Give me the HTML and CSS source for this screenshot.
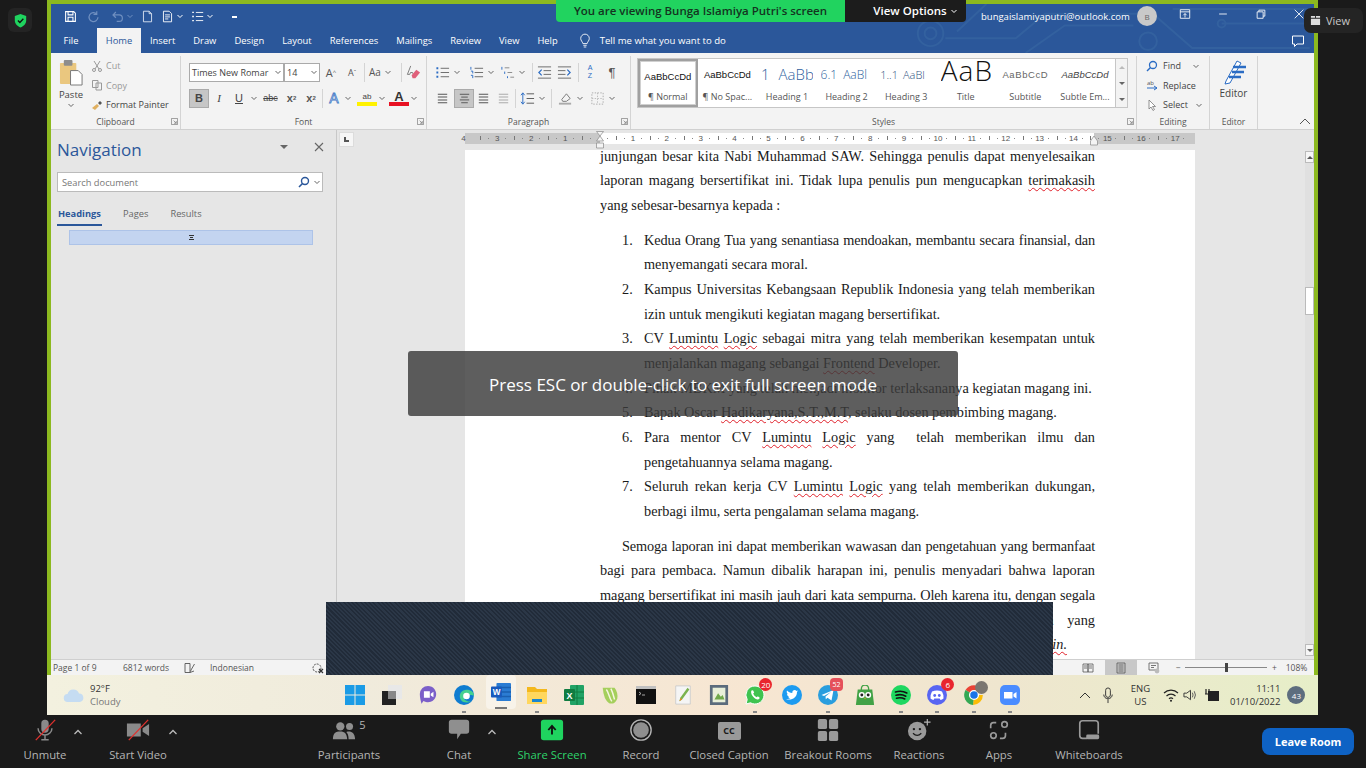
FILE: index.html
```html
<!DOCTYPE html>
<html lang="en">
<head>
    <meta charset="UTF-8">
    <title>Zoom - Word screen share</title>
    <link rel="stylesheet" href="styles.css">
</head>
<body>
    <svg class="defs">
        <symbol id="chev" viewBox="0 0 8 8"><path d="M1.5 3 L4 5.5 L6.5 3" fill="none" stroke="currentColor" stroke-width="1"/></symbol>
        <symbol id="launch" viewBox="0 0 8 8"><path d="M.5.5H7.5V7.5H.5Z M3 3L6 6M6 3.5V6H3.5" fill="none" stroke="#777" stroke-width=".8"/></symbol>
        <symbol id="lines" viewBox="0 0 16 16"><path d="M3 3.5H13M3 6.5H13M3 9.5H13M3 12.5H13" stroke="#555" stroke-width="1.1"/></symbol>
        <symbol id="up" viewBox="0 0 10 8"><path d="M1.5 6 L5 2.5 L8.5 6" fill="none" stroke="#bbb" stroke-width="1.3"/></symbol>
    </svg>

    <div class="app">
        <div class="screen-row">
            <div class="word">
                <!-- title bar -->
                <div class="titlebar">
                    <div class="qat">
                        <svg class="q q-save" viewBox="0 0 16 16"><path d="M2 2H12L14 4V14H2Z M5 2V6H11V2 M5 14V9H11V14" fill="none" stroke="#fff" stroke-width="1.3"/></svg>
                        <svg class="q q-redo" viewBox="0 0 16 16"><path d="M12 5A5.5 5.5 0 1 0 13.5 9 M12 1.5V5.5H8" fill="none" stroke="#6f8fc0" stroke-width="1.5"/></svg>
                        <svg class="q q-undo" viewBox="0 0 16 16"><path d="M3 6H10A4 4 0 0 1 10 14H7 M6 2.5L2.5 6L6 9.5" fill="none" stroke="#6f8fc0" stroke-width="1.5"/></svg>
                        <svg class="car-q dim"><use href="#chev"/></svg>
                        <svg class="q q-new" viewBox="0 0 16 16"><path d="M3 1.5H10L13 4.5V14.5H3Z M10 1.5V4.5H13" fill="none" stroke="#dfe7f3" stroke-width="1.1"/></svg>
                        <svg class="q q-print" viewBox="0 0 16 16"><path d="M3 1.5H10L13 4.5V14.5H3Z M5 6H11M5 8.5H11M5 11H9" fill="none" stroke="#fff" stroke-width="1.1"/></svg>
                        <svg class="car-q"><use href="#chev"/></svg>
                        <svg class="q q-list" viewBox="0 0 16 16"><path d="M6 3H15M6 8H15M6 13H15" stroke="#fff" stroke-width="1.1"/><path d="M1.5 3H3.5M1.5 8H3.5M1.5 13H3.5" stroke="#fff" stroke-width="1.6"/></svg>
                        <svg class="car-q"><use href="#chev"/></svg>
                        <span class="q-more"></span>
                    </div>
                    <div class="account">
                        <span class="email">bungaislamiyaputri@outlook.com</span>
                        <span class="avatar">B</span>
                    </div>
                    <div class="winbtns">
                        <svg class="wb" viewBox="0 0 14 14"><path d="M1.5 2H12.5V12H1.5Z M1.5 4.5H12.5 M7 11V6.5 M5 8.5L7 6.5L9 8.5" fill="none" stroke="#fff"/></svg>
                        <svg class="wb" viewBox="0 0 14 14"><path d="M2.5 7H11.5" stroke="#fff"/></svg>
                        <svg class="wb" viewBox="0 0 14 14"><path d="M2.5 4.5H9.5V12H2.5Z M4.5 4.5V2.5H11.5V9.5H9.5" fill="none" stroke="#fff"/></svg>
                        <svg class="wb" viewBox="0 0 14 14"><path d="M2 2L12 12M12 2L2 12" stroke="#fff"/></svg>
                    </div>
                </div>

                <!-- tabs -->
                <div class="tabs">
                    <span class="tab tab-file">File</span>
                    <span class="tab tab-home">Home</span>
                    <span class="tab">Insert</span>
                    <span class="tab">Draw</span>
                    <span class="tab">Design</span>
                    <span class="tab">Layout</span>
                    <span class="tab">References</span>
                    <span class="tab">Mailings</span>
                    <span class="tab">Review</span>
                    <span class="tab">View</span>
                    <span class="tab">Help</span>
                    <svg class="bulb" viewBox="0 0 14 18"><path d="M4.5 12C4 9.5 2 8.8 2 6A5 5 0 0 1 12 6C12 8.8 10 9.5 9.5 12Z M5 14H9M5.5 16H8.5" fill="none" stroke="#fff"/></svg>
                    <span class="tellme">Tell me what you want to do</span>
                    <svg class="comment" viewBox="0 0 14 14"><path d="M1.5 2H12.5V10H6L3.5 12.5V10H1.5Z" fill="none" stroke="#fff"/></svg>
                </div>
                <!-- circuit pattern in the title area -->
                <svg class="circuit" viewBox="0 0 420 50">
                    <g fill="none" stroke="#33619f" stroke-width="2">
                        <circle cx="33" cy="30" r="13"/><circle cx="33" cy="30" r="6"/>
                        <path d="M48 35H120L150 10H260L300 45H420 M130 50L170 22H240 M280 5H420 M330 20H420 M90 0L60 28"/>
                        <circle cx="330" cy="20" r="4"/><circle cx="255" cy="38" r="9"/>
                    </g>
                </svg>

                <!-- ribbon -->
                <div class="ribbon">
                    <section class="group g-clip">
                        <div class="g-body clip-body">
                            <div class="paste">
                                <svg class="paste-ico" viewBox="0 0 26 28"><rect x="1" y="4" width="17" height="22" rx="1" fill="#eac77f"/><rect x="5" y="1" width="9" height="6" rx="1" fill="#8d8d8d"/><path d="M12 12H20L24 16V27H12Z" fill="#fff" stroke="#777"/></svg>
                                <span class="paste-lbl">Paste</span>
                                <svg class="car"><use href="#chev"/></svg>
                            </div>
                            <div class="clip-list">
                                <div class="clip-row off"><svg class="i12" viewBox="0 0 12 12"><path d="M3 1L8 9M9 1L4 9" stroke="#999"/><circle cx="3" cy="10" r="1.5" fill="none" stroke="#999"/><circle cx="9" cy="10" r="1.5" fill="none" stroke="#999"/></svg>Cut</div>
                                <div class="clip-row off"><svg class="i12" viewBox="0 0 12 12"><path d="M1.5 1.5H7V8.5H1.5Z M5 4H10.5V11H5Z" fill="#f3f3f3" stroke="#999"/></svg>Copy</div>
                                <div class="clip-row"><svg class="i12" viewBox="0 0 12 12"><path d="M1 9L6 5L8 7L4 11Z" fill="#e0b060"/><path d="M7 4L9 2L11 4L9 6Z" fill="#555"/></svg>Format Painter</div>
                            </div>
                        </div>
                        <div class="g-label">Clipboard<svg class="launch"><use href="#launch"/></svg></div>
                    </section>

                    <section class="group g-font">
                        <div class="g-body stack">
                            <div class="rb-row">
                                <div class="combo combo-font"><span>Times New Romar</span><svg class="car"><use href="#chev"/></svg></div>
                                <div class="combo combo-size"><span>14</span><svg class="car"><use href="#chev"/></svg></div>
                                <span class="ib w22 big-a">A<sup>^</sup></span>
                                <span class="ib w20 small-a">A<sup>ˇ</sup></span>
                                <span class="sep ml2"></span>
                                <span class="ib w18 ml1 aa">Aa</span><svg class="car w8"><use href="#chev"/></svg>
                                <span class="sep ml9"></span>
                                <svg class="ib-svg ml4" viewBox="0 0 16 16"><path d="M5 1L1.5 10H4L4.8 8H7L7.5 9.5" fill="none" stroke="#777"/><path d="M6 11L11 5L15 8L10 14H7Z" fill="#e0607a"/></svg>
                            </div>
                            <div class="rb-row row2">
                                <span class="ib w20 on fx-b">B</span>
                                <span class="ib w20 fx-i">I</span>
                                <span class="ib w20 fx-u">U</span>
                                <svg class="car w10"><use href="#chev"/></svg>
                                <span class="ib w23 fx-s">abc</span>
                                <span class="ib w19 fx-x">x<sub>2</sub></span>
                                <span class="ib w20 fx-x">x<sup>2</sup></span>
                                <span class="sep ml1"></span>
                                <span class="ib w20 ml1 fx-a-blue">A</span><svg class="car w8"><use href="#chev"/></svg>
                                <span class="ib w20 ml5 fx-hl">ab</span><svg class="car w10"><use href="#chev"/></svg>
                                <span class="ib w20 ml2 fx-a-red">A</span><svg class="car w10"><use href="#chev"/></svg>
                            </div>
                        </div>
                        <div class="g-label">Font<svg class="launch"><use href="#launch"/></svg></div>
                    </section>

                    <section class="group g-para">
                        <div class="g-body stack">
                            <div class="rb-row">
                                <svg class="ib-svg" viewBox="0 0 16 16"><path d="M6 3.5H15M6 8H15M6 12.5H15" stroke="#666"/><path d="M1.5 3.5H3.5M1.5 8H3.5M1.5 12.5H3.5" stroke="#2b6cc4" stroke-width="2"/></svg><svg class="car w8 ml3"><use href="#chev"/></svg>
                                <svg class="ib-svg ml8" viewBox="0 0 16 16"><path d="M6 3.5H15M6 8H15M6 12.5H15" stroke="#666"/><path d="M2 2V5M2 6.5H4V9M2 11H4V14" stroke="#2b6cc4" fill="none"/></svg><svg class="car w8 ml3"><use href="#chev"/></svg>
                                <svg class="ib-svg ml5" viewBox="0 0 16 16"><path d="M5 3H10M8 8H13M11 13H15" stroke="#888"/><path d="M2 2V5M5 7V9.5M8 12V14" stroke="#2b6cc4"/></svg><svg class="car w8 ml3"><use href="#chev"/></svg>
                                <span class="sep ml6"></span>
                                <svg class="ib-svg ml4" viewBox="0 0 16 16"><path d="M1 2H15M7 6H15M7 10H15M1 14H15" stroke="#666"/><path d="M5 5L2 8L5 11" fill="none" stroke="#2b6cc4" stroke-width="1.3"/></svg>
                                <svg class="ib-svg ml5" viewBox="0 0 16 16"><path d="M1 2H15M1 6H9M1 10H9M1 14H15" stroke="#666"/><path d="M11 5L14 8L11 11" fill="none" stroke="#2b6cc4" stroke-width="1.3"/></svg>
                                <span class="sep ml6"></span>
                                <span class="ib w18 ml2 sort">A<br>Z</span>
                                <span class="ib w22 ml2 pil">¶</span>
                            </div>
                            <div class="rb-row row2">
                                <svg class="ib-svg"><use href="#lines"/></svg>
                                <span class="ib w20 ml4 on ib-wrap"><svg class="ib-in" viewBox="0 0 16 16"><path d="M3 3.5H13M4.5 6.5H11.5M3 9.5H13M4.5 12.5H11.5" stroke="#555"/></svg></span>
                                <svg class="ib-svg ml2"><use href="#lines"/></svg>
                                <svg class="ib-svg ml5 solid"><use href="#lines"/></svg>
                                <span class="sep ml4"></span>
                                <svg class="ib-svg ml4" viewBox="0 0 16 16"><path d="M7 3H15M7 8H15M7 13H15" stroke="#555"/><path d="M3 2V14M1 4.5L3 2L5 4.5M1 11.5L3 14L5 11.5" fill="none" stroke="#2b6cc4"/></svg><svg class="car w8 ml3"><use href="#chev"/></svg>
                                <span class="sep ml5"></span>
                                <svg class="ib-svg ml6" viewBox="0 0 16 16"><path d="M4 9L9 3L13 8L9 11H5Z" fill="#f3f3f3" stroke="#777"/><path d="M1 13.5H14" stroke="#aaa" stroke-width="2"/></svg><svg class="car w8 ml3"><use href="#chev"/></svg>
                                <svg class="ib-svg ml6" viewBox="0 0 16 16"><path d="M2 2H14V14H2Z" fill="none" stroke="#aaa" stroke-dasharray="1.5 1.5"/><path d="M8 2V14M2 8H14" stroke="#bbb" stroke-dasharray="1.5 1.5"/></svg><svg class="car w8 ml3"><use href="#chev"/></svg>
                            </div>
                        </div>
                        <div class="g-label">Paragraph<svg class="launch"><use href="#launch"/></svg></div>
                    </section>

                    <section class="group g-styles">
                        <div class="g-body">
                            <div class="gallery">
                                <div class="st st-on"><span class="st-top">AaBbCcDd</span><span class="st-name">¶ Normal</span></div>
                                <div class="st"><span class="st-top">AaBbCcDd</span><span class="st-name">¶ No Spac...</span></div>
                                <div class="st"><span class="st-top st-h1"><b>1</b>AaBb</span><span class="st-name">Heading 1</span></div>
                                <div class="st"><span class="st-top st-h2"><b>6.1</b>AaBl</span><span class="st-name">Heading 2</span></div>
                                <div class="st"><span class="st-top st-h3"><b>1..1</b>AaBl</span><span class="st-name">Heading 3</span></div>
                                <div class="st"><span class="st-top st-title">AaB</span><span class="st-name">Title</span></div>
                                <div class="st"><span class="st-top st-sub">AaBbCcD</span><span class="st-name">Subtitle</span></div>
                                <div class="st"><span class="st-top st-em">AaBbCcDd</span><span class="st-name">Subtle Em...</span></div>
                                <div class="gal-scroll"><span class="tri-up"></span><span class="tri-dn"></span><span class="tri-more"></span></div>
                            </div>
                        </div>
                        <div class="g-label">Styles<svg class="launch"><use href="#launch"/></svg></div>
                    </section>

                    <section class="group g-edit">
                        <div class="g-body edit-list">
                            <div class="clip-row"><svg class="i12" viewBox="0 0 12 12"><circle cx="7" cy="5" r="3.5" fill="none" stroke="#2b6cc4" stroke-width="1.3"/><path d="M4.5 7.5L1 11" stroke="#2b6cc4" stroke-width="1.5"/></svg>Find<svg class="car w8 ml6"><use href="#chev"/></svg></div>
                            <div class="clip-row"><svg class="i12" viewBox="0 0 12 12"><path d="M1 9H11M8 7L11 9L8 11" fill="none" stroke="#2b6cc4"/><text x="1" y="6" class="ab-t">ab</text></svg>Replace</div>
                            <div class="clip-row"><svg class="i12" viewBox="0 0 12 12"><path d="M3 1L3 10L5 8L7 11.5L8.5 10.5L6.5 7.5H9.5Z" fill="#fff" stroke="#777" stroke-width=".8"/></svg>Select<svg class="car w8 ml2"><use href="#chev"/></svg></div>
                        </div>
                        <div class="g-label">Editing</div>
                    </section>

                    <section class="group g-editor">
                        <div class="g-body editor-body">
                            <svg class="editor-ico" viewBox="0 0 26 26"><path d="M5 22L16 2L20 4L9 24L4 25Z" fill="#fff" stroke="#2b6cc4"/><path d="M12 8H25M11 13H23M8 18H20" stroke="#2b6cc4" stroke-width="2.6"/></svg>
                            <span class="editor-lbl">Editor</span>
                        </div>
                        <div class="g-label">Editor</div>
                    </section>
                    <svg class="collapse" viewBox="0 0 12 8"><path d="M1 7L6 2L11 7" fill="none" stroke="#555"/></svg>
                </div>

                <!-- nav pane + document -->
                <div class="workspace">
                    <aside class="nav">
                        <div class="nav-head">
                            <h2>Navigation</h2>
                            <span class="nav-drop"></span>
                            <svg class="nav-x" viewBox="0 0 10 10"><path d="M1 1L9 9M9 1L1 9" stroke="#666" stroke-width="1.1"/></svg>
                        </div>
                        <div class="nav-search">
                            <span>Search document</span>
                            <svg class="i12" viewBox="0 0 12 12"><circle cx="7" cy="5" r="3.5" fill="none" stroke="#2b579a" stroke-width="1.4"/><path d="M4.5 7.5L1 11" stroke="#2b579a" stroke-width="1.6"/></svg>
                            <svg class="car w8"><use href="#chev"/></svg>
                        </div>
                        <div class="nav-tabs">
                            <span class="nav-tab on">Headings</span>
                            <span class="nav-tab">Pages</span>
                            <span class="nav-tab">Results</span>
                        </div>
                        <div class="nav-item"><span class="hour"></span></div>
                    </aside>

                    <main class="docarea">
                        <div class="docview">
                            <div class="ruler-row">
                                <span class="tab-sel"><i></i></span>
                                <div class="ruler">
                                    <span class="rc">4</span><span class="rc">3</span><span class="rc">2</span><span class="rc">1</span><span class="rc"></span><span class="rc">1</span><span class="rc">2</span><span class="rc">3</span><span class="rc">4</span><span class="rc">5</span><span class="rc">6</span><span class="rc">7</span><span class="rc">8</span><span class="rc">9</span><span class="rc">10</span><span class="rc">11</span><span class="rc">12</span><span class="rc">13</span><span class="rc">14</span><span class="rc">15</span><span class="rc">16</span><span class="rc">17</span>
                                    <svg class="marker m-left" viewBox="0 0 8 18"><path d="M.5.5H7.5L4 5L7.5 10H.5L4 5Z M.5 12H7.5V17H.5Z" fill="#f4f4f4" stroke="#888" stroke-width=".7"/></svg>
                                    <svg class="marker m-right" viewBox="0 0 8 18"><path d="M4 5L7.5 10V14H.5V10Z" fill="#f4f4f4" stroke="#888" stroke-width=".7"/></svg>
                                </div>
                            </div>
                            <article class="page">
                                <div class="page-text">
                                    <p class="ln">junjungan besar kita Nabi Muhammad SAW. Sehingga penulis dapat menyelesaikan</p>
                                    <p class="ln">laporan magang bersertifikat ini. Tidak lupa penulis pun mengucapkan <u>terimakasih</u></p>
                                    <p class="ln end gap">yang sebesar-besarnya kepada :</p>

                                    <div class="li"><span class="num">1.</span><div class="li-text">
                                        <p class="ln tight">Kedua Orang Tua yang senantiasa mendoakan, membantu secara finansial, dan</p>
                                        <p class="ln end">menyemangati secara moral.</p></div></div>
                                    <div class="li"><span class="num">2.</span><div class="li-text">
                                        <p class="ln">Kampus Universitas Kebangsaan Republik Indonesia yang telah memberikan</p>
                                        <p class="ln end">izin untuk mengikuti kegiatan magang bersertifikat.</p></div></div>
                                    <div class="li"><span class="num">3.</span><div class="li-text">
                                        <p class="ln">CV <u>Lumintu</u> <u>Logic</u> sebagai mitra yang telah memberikan kesempatan untuk</p>
                                        <p class="ln end">menjalankan magang sebangai <u>Frontend</u> Developer.</p></div></div>
                                    <div class="li"><span class="num">4.</span><div class="li-text">
                                        <p class="ln end">Pihak MBKM yang telah menjadi monitor terlaksananya kegiatan magang ini.</p></div></div>
                                    <div class="li"><span class="num">5.</span><div class="li-text">
                                        <p class="ln end">Bapak Oscar <u>Hadikaryana,S.T.,M.T</u>, selaku dosen pembimbing magang.</p></div></div>
                                    <div class="li"><span class="num">6.</span><div class="li-text">
                                        <p class="ln">Para mentor CV <u>Lumintu</u> <u>Logic</u> yang &nbsp;telah memberikan ilmu dan</p>
                                        <p class="ln end">pengetahuannya selama magang.</p></div></div>
                                    <div class="li"><span class="num">7.</span><div class="li-text">
                                        <p class="ln">Seluruh rekan kerja CV <u>Lumintu</u> <u>Logic</u> yang telah memberikan dukungan,</p>
                                        <p class="ln end gap">berbagi ilmu, serta pengalaman selama magang.</p></div></div>

                                    <p class="ln first tight">Semoga laporan ini dapat memberikan wawasan dan pengetahuan yang bermanfaat</p>
                                    <p class="ln">bagi para pembaca. Namun dibalik harapan ini, penulis menyadari bahwa laporan</p>
                                    <p class="ln tight">magang bersertifikat ini masih jauh dari kata sempurna. Oleh karena itu, dengan segala</p>
                                    <p class="ln">kerendahan hati, penulis mengharapkan kritik, saran serta masukan yang</p>
                                    <p class="ln tail">membangun untuk perbaikan di masa mendatang. <u><em>Aamiin.</em></u></p>
                                </div>
                            </article>
                        </div>
                        <div class="vscroll">
                            <span class="vs-btn"><i class="tri-up"></i></span>
                            <span class="vs-thumb"></span>
                            <span class="vs-btn"><i class="tri-dn"></i></span>
                        </div>
                    </main>
                </div>

                <!-- status bar -->
                <div class="statusbar">
                    <span class="sb-page">Page 1 of 9</span>
                    <span class="sb-words">6812 words</span>
                    <svg class="i12 sb-book" viewBox="0 0 12 12"><path d="M1 1.5H6V10.5H1Z M6 10.5L10 9M10.5 2L7 8L6.5 9.5" fill="none" stroke="#555" stroke-width=".9"/></svg>
                    <span class="sb-lang">Indonesian</span>
                    <svg class="i12 sb-acc" viewBox="0 0 12 12"><circle cx="5" cy="6" r="4" fill="none" stroke="#555" stroke-dasharray="2 1"/><path d="M7 7L11 11M11 7L7 11" stroke="#333" stroke-width="1.2"/></svg>
                    <div class="sb-right">
                        <svg class="i12" viewBox="0 0 12 12"><path d="M1 2H6V10H1Z M6 2H11V10H6Z M2 4H5M2 6H5M7 4H10M7 6H10" fill="none" stroke="#555" stroke-width=".8"/></svg>
                        <span class="sb-print"><svg class="i12" viewBox="0 0 12 12"><path d="M2 1H10V11H2Z M3.5 3H8.5M3.5 5H8.5M3.5 7H8.5M3.5 9H8.5" fill="none" stroke="#555" stroke-width=".8"/></svg></span>
                        <svg class="i12" viewBox="0 0 12 12"><path d="M1 1H10V8H1Z M3 3.5H8M3 5.5H6" fill="none" stroke="#555" stroke-width=".8"/><circle cx="9" cy="9" r="2.4" fill="#bbb"/></svg>
                        <span class="zoom-minus">−</span>
                        <span class="slider"><i></i></span>
                        <span class="zoom-plus">+</span>
                        <span class="zoom-pct">108%</span>
                    </div>
                </div>
            </div>

            <!-- windows taskbar -->
            <div class="taskbar">
                <div class="weather">
                    <svg class="cloud" viewBox="0 0 22 16"><path d="M5 15A4 4 0 0 1 4.5 7 A6 6 0 0 1 16 6.5 A4.3 4.3 0 0 1 17 15Z" fill="#c5dcf2"/></svg>
                    <div class="w-text"><span>92°F</span><span class="w-sub">Cloudy</span></div>
                </div>
                <div class="tk-icons">
                    <span class="tk"><svg class="ti" viewBox="0 0 20 20"><path d="M0 0H9.5V9.5H0Z M10.5 0H20V9.5H10.5Z M0 10.5H9.5V20H0Z M10.5 10.5H20V20H10.5Z" fill="#1a9be6"/></svg></span>
                    <span class="tk"><svg class="ti" viewBox="0 0 20 20"><rect x="0" y="6" width="14" height="14" fill="#222"/><rect x="6" y="0" width="14" height="14" fill="#e8e8e8"/><rect x="6" y="6" width="8" height="8" fill="#888"/></svg></span>
                    <span class="tk"><svg class="ti" viewBox="0 0 20 22"><path d="M10 1A9 9 0 1 1 5 17.5C4 19 3 20 3 21 C2 18 1 14 1 10A9 9 0 0 1 10 1Z" fill="#7b5fc9"/><path d="M5.5 7H12V14H5.5Z M13 9.5L16 7.5V13.5L13 11.5Z" fill="#fff"/></svg></span>
                    <span class="tk run"><svg class="ti" viewBox="0 0 20 20"><circle cx="10" cy="10" r="10" fill="#0f7cd0"/><path d="M20 11C20 6 15 4 11 5 C6 6 4.5 11 7 15 C9 18 14 18 17 16.5 C12 17 9 14 10.5 11.5 C12 9 20 10 20 11Z" fill="#45d08f"/><circle cx="12.5" cy="11" r="3.3" fill="#fff"/></svg></span>
                    <span class="tk run wide active"><svg class="ti" viewBox="0 0 22 20"><rect x="6" y="0" width="16" height="20" rx="1" fill="#2b7cd3"/><path d="M6 5H22M6 10H22M6 15H22" stroke="#1a5fb0" stroke-width="1.5"/><rect x="0" y="4" width="12" height="12" rx="1" fill="#185abd"/><text x="2" y="13.5" class="ti-t">W</text></svg></span>
                    <span class="tk run"><svg class="ti" viewBox="0 0 20 20"><path d="M0 2H8L10 4H20V19H0Z" fill="#f4b81c"/><path d="M0 7H20V19H0Z" fill="#ffd75e"/><rect x="5" y="14" width="10" height="3" fill="#1a86d0"/></svg></span>
                    <span class="tk"><svg class="ti" viewBox="0 0 20 20"><rect x="6" y="0" width="14" height="20" rx="1" fill="#21a366"/><path d="M13 0V20M6 7H20M6 13H20" stroke="#107c41"/><rect x="0" y="4" width="11" height="12" rx="1" fill="#107c41"/><text x="2.5" y="13.5" class="ti-t">X</text></svg></span>
                    <span class="tk"><svg class="ti" viewBox="0 0 20 22"><path d="M2 3H15Q19 8 18 15Q15 22 9 20Q3 16 2 3Z" fill="#a5cf5c"/><path d="M6 5C9 9 9 14 12 18M11 4C13 8 14 12 15 16" stroke="#f6f6e0" stroke-width="1.6" fill="none"/></svg></span>
                    <span class="tk"><svg class="ti" viewBox="0 0 20 20"><rect x="0" y="1" width="20" height="18" fill="#111"/><rect x="0" y="1" width="20" height="3" fill="#c0c0c0"/><path d="M3 7L5 8.5L3 10M6 10H9" stroke="#ccc" stroke-width=".8" fill="none"/></svg></span>
                    <span class="tk"><svg class="ti" viewBox="0 0 20 22"><path d="M2 1H18V21H2Z" fill="#f5f5f5" stroke="#ccc"/><path d="M15 3L7 14L6 18L9 16L17 5Z" fill="#7bb34f"/><path d="M6 18L9 16L7.5 14Z" fill="#e88b2c"/></svg></span>
                    <span class="tk"><svg class="ti" viewBox="0 0 20 22"><rect x="0" y="0" width="20" height="22" fill="#5b6b7c"/><rect x="3" y="3" width="14" height="16" fill="#e8efd8"/><path d="M5 16L9 9L12 13L14 11L16 16Z" fill="#6fa84a"/></svg></span>
                    <span class="tk run"><svg class="ti" viewBox="0 0 20 20"><path d="M10 1A9 9 0 1 1 5.5 17.8L1 19L2.2 14.6A9 9 0 0 1 10 1Z" fill="#3fc350" stroke="#fff"/><path d="M6.5 5.5C5 8 8 13.5 12.5 14.5C14 14.7 15 13 14.5 12.5L12.8 11.3L11.8 12.3C10 11.7 8.7 10 8.2 8.6L9.2 7.5L8 5.3Z" fill="#fff"/></svg><b class="bdg bdg-wa">20</b></span>
                    <span class="tk"><svg class="ti" viewBox="0 0 20 20"><circle cx="10" cy="10" r="10" fill="#1d9bf0"/><path d="M4 14C9 16 15 13 15 7L16 5.5L14.5 6C13 4 10 5.5 10.3 8C8 8 6.5 7 5 5.5C4.3 7 5 8.5 6 9.3L5 9C5 10.5 6 11.5 7.3 11.8L6.3 12C6.8 13 7.5 13.2 8.5 13.3C7.5 14 6 14.3 4 14Z" fill="#fff"/></svg></span>
                    <span class="tk run"><svg class="ti" viewBox="0 0 20 20"><circle cx="10" cy="10" r="10" fill="#2a9ede"/><path d="M3.5 10L15.5 5L13.5 15.5L9.5 12.7L7.8 14.3L7.5 11.5L13 7L6 11Z" fill="#fff"/></svg><b class="bdg bdg-tg">52</b></span>
                    <span class="tk"><svg class="ti" viewBox="0 0 20 22"><path d="M2 5H18L20 22H0Z" fill="#42a246"/><path d="M6 6V4A4 4 0 0 1 14 4V6" fill="none" stroke="#42a246" stroke-width="1.5"/><circle cx="6.5" cy="11" r="3.3" fill="#fff"/><circle cx="13.5" cy="11" r="3.3" fill="#fff"/><circle cx="6.5" cy="11" r="1.6" fill="#222"/><circle cx="13.5" cy="11" r="1.6" fill="#222"/><path d="M9 14H11L10 16Z" fill="#f5a623"/></svg></span>
                    <span class="tk run"><svg class="ti" viewBox="0 0 20 20"><circle cx="10" cy="10" r="10" fill="#1ed760"/><path d="M4.5 7C8 6 12.5 6.2 15.8 8M5 10.2C8 9.4 12 9.6 14.8 11.2M5.5 13.2C8 12.6 11.5 12.8 13.8 14" fill="none" stroke="#111" stroke-width="1.6" stroke-linecap="round"/></svg></span>
                    <span class="tk run"><svg class="ti" viewBox="0 0 20 20"><circle cx="10" cy="10" r="10" fill="#5865f2"/><path d="M5 6.5Q10 4.5 15 6.5Q17 10 16.5 13.5Q15 14.8 13.5 15L12.7 13.6H7.3L6.5 15Q5 14.8 3.5 13.5Q3 10 5 6.5Z" fill="#fff"/><circle cx="7.7" cy="10.5" r="1.4" fill="#5865f2"/><circle cx="12.3" cy="10.5" r="1.4" fill="#5865f2"/></svg><b class="bdg bdg-dc">6</b></span>
                    <span class="tk run"><svg class="ti" viewBox="0 0 20 20"><path d="M10 10L1.5 5A10 10 0 0 1 18.9 5.5H10Z" fill="#ea4335"/><path d="M10 10H18.9A10 10 0 0 1 9 20Z" fill="#fbbc05"/><path d="M10 10L9 20A10 10 0 0 1 1.5 5Z" fill="#34a853"/><circle cx="10" cy="10" r="4.4" fill="#1a73e8" stroke="#fff" stroke-width="1.3"/></svg><i class="chrome-face"></i></span>
                    <span class="tk run"><svg class="ti" viewBox="0 0 20 20"><rect width="20" height="20" rx="5" fill="#4a8cff"/><path d="M4 7H12.5V13.5H4Z M13.5 9L16.5 7V13.5L13.5 11.5Z" fill="#fff"/></svg></span>
                </div>
                <div class="tray">
                    <svg class="tr-caret" viewBox="0 0 12 8"><path d="M1 7L6 2L11 7" fill="none" stroke="#333"/></svg>
                    <svg class="tr-mic" viewBox="0 0 12 18"><rect x="3.5" y="1" width="5" height="10" rx="2.5" fill="none" stroke="#333"/><path d="M1.5 8A4.5 4.5 0 0 0 10.5 8M6 13V17" fill="none" stroke="#333"/></svg>
                    <span class="tr-lang">ENG<br>US</span>
                    <svg class="tr-wifi" viewBox="0 0 16 14"><path d="M1 5A10 10 0 0 1 15 5M3.5 8A6.5 6.5 0 0 1 12.5 8M6 10.8A3 3 0 0 1 10 10.8" fill="none" stroke="#222" stroke-width="1.2"/><circle cx="8" cy="12.8" r="1" fill="#222"/></svg>
                    <svg class="tr-vol" viewBox="0 0 16 14"><path d="M1 5H4L8 2V12L4 9H1Z" fill="none" stroke="#333"/><path d="M10 4.5Q11.5 7 10 9.5M12 3Q14.5 7 12 11" fill="none" stroke="#555"/></svg>
                    <svg class="tr-batt" viewBox="0 0 16 16"><rect x="4" y="4" width="11" height="10" fill="#222"/><path d="M1 7H4M2 2V7M5 2V4" stroke="#222" stroke-width="1.2"/></svg>
                    <span class="tr-clock">11:11<br>01/10/2022</span>
                    <span class="tr-badge">43</span>
                </div>
            </div>
        </div>

        <!-- zoom toolbar -->
        <footer class="toolbar">
            <div class="tb tb-unmute">
                <svg class="tb-ico" viewBox="0 0 26 26"><rect x="9" y="2" width="8" height="14" rx="4" fill="#8a8a8a"/><path d="M5.5 11A7.5 7.5 0 0 0 20.5 11M13 19V23M9 23.5H17" fill="none" stroke="#8a8a8a" stroke-width="1.6"/><path d="M3 24L24 2" stroke="#e0312e" stroke-width="1.4"/></svg>
                <span>Unmute</span>
                <svg class="tb-up"><use href="#up"/></svg>
            </div>
            <div class="tb tb-video">
                <svg class="tb-ico" viewBox="0 0 26 26"><path d="M1 6H16V20H1Z M18 11L25 6.5V19.5L18 15Z" fill="#8a8a8a"/><path d="M3 24L24 2" stroke="#e0312e" stroke-width="1.4"/></svg>
                <span>Start Video</span>
                <svg class="tb-up"><use href="#up"/></svg>
            </div>
            <div class="tb tb-part">
                <div class="tb-top"><svg class="tb-ico part-ico" viewBox="0 0 26 22"><circle cx="9" cy="6" r="4.5" fill="#8f8f8f"/><circle cx="19" cy="6" r="3.8" fill="#8f8f8f"/><path d="M1 20C1 13 4 11.5 9 11.5S16 14 16.5 20Z M18 20C18 16 17 13.5 15.5 12C20 10.5 25 12.5 25 20Z" fill="#8f8f8f"/></svg><em>5</em></div>
                <span>Participants</span>
            </div>
            <div class="tb tb-chat">
                <svg class="tb-ico" viewBox="0 0 26 26"><path d="M5 2H21Q24 2 24 5V14Q24 17 21 17H15L11 23V17H5Q2 17 2 14V5Q2 2 5 2Z" fill="#8f8f8f"/></svg>
                <span>Chat</span>
                <svg class="tb-up"><use href="#up"/></svg>
            </div>
            <div class="tb tb-share">
                <svg class="tb-ico" viewBox="0 0 26 26"><rect x="1" y="2" width="24" height="22" rx="3" fill="#1fd45f"/><path d="M13 18V9M9 13L13 8.5L17 13" fill="none" stroke="#111" stroke-width="2"/></svg>
                <span>Share Screen</span>
            </div>
            <div class="tb tb-rec">
                <svg class="tb-ico" viewBox="0 0 26 26"><circle cx="13" cy="13" r="11" fill="none" stroke="#b4b4b4" stroke-width="1.5"/><circle cx="13" cy="13" r="8.5" fill="#8f8f8f"/></svg>
                <span>Record</span>
            </div>
            <div class="tb tb-cc">
                <div class="cc-box">CC</div>
                <span>Closed Caption</span>
            </div>
            <div class="tb tb-break">
                <svg class="tb-ico" viewBox="0 0 26 26"><rect x="2" y="1" width="10" height="11" rx="2" fill="#9a9a9a"/><rect x="14" y="1" width="10" height="11" rx="2" fill="#9a9a9a"/><rect x="2" y="14" width="10" height="11" rx="2" fill="#9a9a9a"/><rect x="14" y="14" width="10" height="11" rx="2" fill="#9a9a9a"/></svg>
                <span>Breakout Rooms</span>
            </div>
            <div class="tb tb-react">
                <svg class="tb-ico" viewBox="0 0 26 26"><circle cx="11" cy="14" r="10" fill="#9a9a9a"/><circle cx="7.5" cy="12" r="1.3" fill="#1a1a1a"/><circle cx="14" cy="12" r="1.3" fill="#1a1a1a"/><path d="M6.5 16.5Q11 21 15.5 16.5" fill="none" stroke="#1a1a1a" stroke-width="1.3"/><path d="M22 1V8M18.5 4.5H25.5" stroke="#b4b4b4" stroke-width="1.3"/></svg>
                <span>Reactions</span>
            </div>
            <div class="tb tb-apps">
                <svg class="tb-ico" viewBox="0 0 26 26"><path d="M10 5H7Q4 5 4 8V11M20 16V19Q20 22 17 22H14" fill="none" stroke="#9a9a9a" stroke-width="1.8"/><circle cx="19" cy="7" r="3" fill="none" stroke="#9a9a9a" stroke-width="1.8"/><circle cx="7" cy="19" r="3" fill="none" stroke="#9a9a9a" stroke-width="1.8"/></svg>
                <span>Apps</span>
            </div>
            <div class="tb tb-white">
                <svg class="tb-ico" viewBox="0 0 26 26"><path d="M11 22H6Q3 22 3 19V6Q3 3 6 3H20Q23 3 23 6V17" fill="none" stroke="#9a9a9a" stroke-width="1.8"/><rect x="10" y="18" width="14" height="5" rx="1.5" fill="#9a9a9a"/></svg>
                <span>Whiteboards</span>
            </div>
            <button class="leave">Leave Room</button>
        </footer>

        <!-- things on top of the shared screen -->
        <div class="shield"><svg viewBox="0 0 16 18"><path d="M8 1L15 3.5V9C15 13 12 16 8 17.5C4 16 1 13 1 9V3.5Z" fill="#1fd45f"/><path d="M4.8 9L7.2 11.4L11.5 6.8" fill="none" stroke="#111" stroke-width="1.6"/></svg></div>
        <div class="view-btn"><svg viewBox="0 0 12 12"><path d="M1 1H5.5V3H1Z M6.5 1H11V3H6.5Z M1 4H11V11H1Z" fill="#ddd"/></svg>View</div>
        <div class="banner">
            <span class="banner-green">You are viewing Bunga Islamiya Putri's screen</span>
            <span class="banner-opts">View Options<svg class="car"><use href="#chev"/></svg></span>
        </div>
        <div class="esc-toast">Press ESC or double-click to exit full screen mode</div>
        <div class="hatch"></div>
    </div>
</body>
</html>
```

FILE: styles.css
```css
* {
    margin: 0;
    padding: 0;
    box-sizing: border-box;
}

body {
    background: #1a1a1a;
    font-family: "Open Sans", sans-serif;
    overflow: hidden;
}

.defs {
    display: none;
}

.app {
    position: relative;
    width: 1366px;
    height: 768px;
    display: flex;
    flex-direction: column;
    overflow: hidden;
}

.screen-row {
    width: 1271px;
    height: 715px;
    margin-left: 47px;
    display: flex;
    flex-direction: column;
}

.word {
    position: relative;
    height: 675px;
    display: flex;
    flex-direction: column;
    border: 4px solid #8cb91f;
    border-bottom: none;
    background: #2b579a;
}

/* title bar */
.titlebar {
    height: 24px;
    display: flex;
    align-items: center;
    color: white;
    position: relative;
    z-index: 1;
}

.qat {
    display: flex;
    align-items: center;
    padding-left: 13px;
    width: 620px;
}

.q {
    width: 13px;
    height: 13px;
    flex: none;
}

.q-redo { margin-left: 10px; }
.q-undo { margin-left: 11px; }
.q-new { margin-left: 7px; }
.q-print { margin-left: 7px; }
.q-list { margin-left: 7px; }

.car-q {
    width: 8px;
    height: 8px;
    color: white;
    margin-left: 2px;
}

.car-q.dim {
    color: #6f8fc0;
}

.q-more {
    width: 5px;
    height: 2px;
    margin: 2px 0 0 18px;
    border-top: 1px solid white;
    border-bottom: 1px solid white;
}

.account {
    margin-left: 310px;
    display: flex;
    align-items: center;
    gap: 9px;
}

.email {
    font-size: 9.5px;
    white-space: nowrap;
    width: 147px;
}

.avatar {
    width: 20px;
    height: 20px;
    border-radius: 50%;
    background: #c9c9c9;
    color: #666;
    font-size: 8px;
    display: flex;
    align-items: center;
    justify-content: center;
}

.winbtns {
    margin-left: 22px;
    display: flex;
    gap: 26px;
    margin-top: -4px;
}

.wb {
    width: 12px;
    height: 12px;
}

/* tabs */
.tabs {
    height: 25px;
    display: flex;
    align-items: center;
    color: white;
    font-size: 9.4px;
    position: relative;
    z-index: 1;
}

.tab {
    padding: 0 9px;
    height: 25px;
    line-height: 26px;
    white-space: nowrap;
}

.tab-file {
    width: 46px;
    text-align: center;
    padding: 0 6px 0 0;
}

.tab-home {
    width: 44px;
    padding: 0;
    text-align: center;
    background: #f3f3f3;
    color: #2b579a;
}

.bulb {
    width: 12px;
    height: 16px;
    margin-left: 12px;
}

.tellme {
    margin-left: 9px;
    white-space: nowrap;
    font-size: 9.6px;
}

.comment {
    position: absolute;
    right: 9px;
    top: 6px;
    width: 14px;
    height: 14px;
}

.circuit {
    position: absolute;
    top: 0;
    right: 0;
    width: 420px;
    height: 49px;
}

/* ribbon */
.ribbon {
    height: 77px;
    background: #f3f3f3;
    border-bottom: 1px solid #d0d0d0;
    display: flex;
    color: #444;
    font-size: 9.5px;
    position: relative;
}

.group {
    height: 73px;
    margin-top: 3px;
    border-right: 1px solid #d4d4d4;
    display: flex;
    flex-direction: column;
    flex: none;
}

.g-clip { width: 130px; }
.g-font { width: 246px; }
.g-para { width: 204px; }
.g-styles { width: 506px; }
.g-edit { width: 73px; }
.g-editor { width: 48px; }

.g-body {
    flex: 1;
    min-height: 0;
}

.g-label {
    height: 14px;
    text-align: center;
    font-size: 8.5px;
    line-height: 14px;
    position: relative;
    color: #555;
}

.launch {
    position: absolute;
    right: 2px;
    top: 3px;
    width: 7px;
    height: 7px;
}

.car {
    width: 8px;
    height: 8px;
    color: #666;
    flex: none;
}

.w8 { width: 8px; }
.w10 { width: 10px; }
.w18 { width: 18px; }
.w19 { width: 19px; }
.w20 { width: 20px; }
.w22 { width: 22px; }
.w23 { width: 23px; }
.ml1 { margin-left: 1px; }
.ml2 { margin-left: 2px; }
.ml3 { margin-left: 3px; }
.ml4 { margin-left: 4px; }
.ml5 { margin-left: 5px; }
.ml6 { margin-left: 6px; }
.ml8 { margin-left: 8px; }
.ml9 { margin-left: 9px; }

.clip-body {
    display: flex;
}

.paste {
    width: 40px;
    display: flex;
    flex-direction: column;
    align-items: center;
}

.paste-ico {
    width: 25px;
    height: 27px;
    margin-top: 3px;
}

.paste-lbl {
    margin-top: 2px;
    line-height: 13px;
}

.clip-list {
    padding-top: 0;
}

.clip-row {
    height: 19.5px;
    display: flex;
    align-items: center;
    gap: 3px;
    font-size: 9px;
    white-space: nowrap;
}

.clip-row.off {
    color: #999;
}

.i12 {
    width: 12px;
    height: 12px;
    flex: none;
}

.ab-t {
    font-size: 6px;
    fill: #555;
}

.stack {
    display: flex;
    flex-direction: column;
    padding: 6px 0 0 8px;
}

.rb-row {
    height: 20px;
    display: flex;
    align-items: center;
}

.row2 {
    margin-top: 6px;
}

.combo {
    height: 19px;
    background: white;
    border: 1px solid #aaa;
    display: flex;
    align-items: center;
    justify-content: space-between;
    font-size: 9px;
    padding: 0 1px 0 2px;
    white-space: nowrap;
    overflow: hidden;
    flex: none;
}

.combo-font {
    width: 95px;
}

.combo-size {
    width: 36px;
}

.ib {
    height: 19px;
    display: flex;
    align-items: center;
    justify-content: center;
    font-family: "Liberation Serif", serif;
    font-size: 11px;
    flex: none;
}

.ib.on {
    background: #c6c6c6;
    border: 1px solid #aaa;
}

.ib-svg {
    width: 15px;
    height: 15px;
    flex: none;
}

.ib-wrap .ib-in {
    width: 15px;
    height: 15px;
}

.solid {
    opacity: .45;
    stroke-width: 2px;
}

.sep {
    width: 1px;
    height: 19px;
    background: #d4d4d4;
    flex: none;
}

.big-a {
    font-family: "Open Sans", sans-serif;
    font-size: 11px;
    color: #555;
}

.small-a {
    font-family: "Open Sans", sans-serif;
    font-size: 9px;
    color: #555;
}

.ib sup, .ib sub {
    font-size: 6px;
    line-height: 0;
}

.aa {
    font-family: "Open Sans", sans-serif;
    font-size: 10px;
    color: #555;
}

.fx-b { font-family: "Liberation Sans", sans-serif; font-weight: 700; }
.fx-i { font-style: italic; }
.fx-u { text-decoration: underline; font-family: "Liberation Sans", sans-serif; }
.fx-s { text-decoration: line-through; font-size: 9px; font-family: "Liberation Sans", sans-serif; }
.fx-x { font-family: "Liberation Sans", sans-serif; font-weight: 700; color: #555; }

.fx-a-blue {
    font-family: "Liberation Sans", sans-serif;
    font-size: 14px;
    color: #eaf1fb;
    -webkit-text-stroke: .8px #4a7ec8;
}

.fx-hl {
    font-size: 8px;
    font-family: "Liberation Sans", sans-serif;
    border-bottom: 4px solid #fff200;
    height: 16px;
    color: #444;
}

.fx-a-red {
    font-family: "Liberation Sans", sans-serif;
    font-size: 13px;
    font-weight: 700;
    border-bottom: 4px solid #e81123;
    height: 16px;
    color: #333;
}

.sort {
    font-family: "Liberation Sans", sans-serif;
    font-size: 7px;
    line-height: 8px;
    color: #2b6cc4;
    text-align: center;
    flex-direction: column;
}

.pil {
    color: #555;
    font-size: 13px;
    font-family: "Liberation Sans", sans-serif;
}

/* style gallery */
.gallery {
    width: 491px;
    height: 50px;
    margin: 2px 0 0 6px;
    background: white;
    border: 1px solid #c6c6c6;
    display: flex;
    position: relative;
    overflow: hidden;
}

.st {
    width: 59.6px;
    height: 48px;
    flex: none;
    display: flex;
    flex-direction: column;
    align-items: center;
    overflow: hidden;
    font-size: 9px;
    color: #555;
}

.st-on {
    border: 2px solid #a0a0a0;
    outline: 1px solid #d0d0d0;
    outline-offset: -3px;
}

.st-top {
    height: 31px;
    line-height: 31px;
    color: #111;
    font-family: "Liberation Sans", sans-serif;
    font-size: 9.5px;
    white-space: nowrap;
    display: block;
    overflow: visible;
}

.st-on .st-top {
    height: 29px;
}

.st-name {
    font-size: 9px;
    line-height: 14px;
    white-space: nowrap;
}

.st-h1, .st-h2, .st-h3 {
    color: #2f5f9e;
    font-family: "Open Sans", sans-serif;
    width: 52px;
    overflow: hidden;
    display: flex;
    gap: 9px;
    white-space: nowrap;
    font-weight: 300;
}

.st-h1 b, .st-h2 b, .st-h3 b {
    font-weight: 300;
}

.st-h1 { font-size: 15px; }
.st-h2 { font-size: 12px; gap: 6px; }
.st-h3 { font-size: 11px; gap: 5px; color: #2f4f7e; }

.st-title {
    font-family: "Open Sans", sans-serif;
    font-weight: 300;
    font-size: 28px;
    line-height: 22px;
    letter-spacing: 1px;
    width: 50px;
    overflow: hidden;
}

.st-sub {
    color: #666;
    letter-spacing: .6px;
}

.st-em {
    font-style: italic;
    color: #444;
}

.gal-scroll {
    position: absolute;
    right: 0;
    top: 0;
    width: 12px;
    height: 48px;
    border-left: 1px solid #c6c6c6;
    background: #f3f3f3;
    display: flex;
    flex-direction: column;
    align-items: center;
    justify-content: space-around;
}

.tri-up, .tri-dn, .tri-more {
    display: block;
    width: 0;
    height: 0;
    border-left: 3px solid transparent;
    border-right: 3px solid transparent;
}

.tri-up { border-bottom: 3px solid #bbb; }
.tri-dn { border-top: 3px solid #666; }
.tri-more { border-top: 3px solid #666; }

.edit-list {
    padding-left: 9px;
    padding-top: 0;
}

.edit-list .clip-row {
    gap: 5px;
}

.editor-body {
    display: flex;
    flex-direction: column;
    align-items: center;
}

.editor-ico {
    width: 26px;
    height: 26px;
    margin-top: 3px;
}

.editor-lbl {
    margin-top: 1px;
    font-size: 10px;
}

.collapse {
    position: absolute;
    right: 3px;
    bottom: 4px;
    width: 12px;
    height: 8px;
}

/* workspace */
.workspace {
    flex: 1;
    min-height: 0;
    display: flex;
    background: #e6e6e6;
}

.nav {
    width: 286px;
    border-right: 1px solid #c8c8c8;
    padding: 0 13px 0 6px;
    flex: none;
}

.nav-head {
    height: 42px;
    display: flex;
    align-items: center;
    position: relative;
}

.nav-head h2 {
    font-size: 17px;
    font-weight: 400;
    color: #2b579a;
    padding-bottom: 4px;
}

.nav-drop {
    position: absolute;
    left: 223px;
    top: 15px;
    width: 0;
    height: 0;
    border-left: 4px solid transparent;
    border-right: 4px solid transparent;
    border-top: 4px solid #666;
}

.nav-x {
    position: absolute;
    left: 257px;
    top: 12px;
    width: 10px;
    height: 10px;
}

.nav-search {
    height: 20px;
    background: white;
    border: 1px solid #bbb;
    display: flex;
    align-items: center;
    font-size: 9.3px;
    color: #777;
    padding: 0 1px 0 4px;
    gap: 3px;
}

.nav-search span {
    flex: 1;
}

.nav-tabs {
    height: 34px;
    display: flex;
    align-items: flex-end;
    gap: 20px;
    font-size: 9.3px;
    color: #666;
}

.nav-tab {
    height: 21px;
    line-height: 18px;
    padding: 0 1px;
}

.nav-tab.on {
    font-weight: 700;
    color: #2b579a;
    border-bottom: 2px solid #2b579a;
}

.nav-item {
    width: 244px;
    height: 15px;
    margin: 4px 0 0 12px;
    background: #c3d4f0;
    border: 1px solid #adc3e8;
    display: flex;
    align-items: center;
    justify-content: center;
}

.hour {
    width: 5px;
    height: 5px;
    border-top: 1px solid #333;
    border-bottom: 1px solid #333;
    background: linear-gradient(#333, #333) center/3px 1px no-repeat;
}

.docarea {
    flex: 1;
    min-width: 0;
    display: flex;
}

.docview {
    width: 968px;
    display: flex;
    flex-direction: column;
}

.ruler-row {
    height: 20px;
    display: flex;
    padding-top: 3px;
}

.tab-sel {
    width: 13px;
    height: 13px;
    margin-left: 3px;
    background: #f6f6f6;
    box-shadow: 0 0 0 1px #dcdcdc;
    position: relative;
}

.tab-sel i {
    position: absolute;
    left: 4px;
    top: 4px;
    width: 5px;
    height: 5px;
    border-left: 2px solid #555;
    border-bottom: 2px solid #555;
}

.ruler {
    position: relative;
    width: 730px;
    height: 11px;
    margin-left: 112px;
    display: flex;
    background: linear-gradient(to right, #c8c8c8 135px, white 135px, white 629px, #c8c8c8 629px);
}

.rc {
    flex: none;
    width: 33.9px;
    height: 11px;
    font-size: 8px;
    line-height: 11px;
    text-align: center;
    color: #555;
    font-family: "Liberation Sans", sans-serif;
    background:
        linear-gradient(#777, #777) 0 3px / 1px 4px no-repeat,
        linear-gradient(#888, #888) 8px 5px / 1px 1px no-repeat,
        linear-gradient(#888, #888) 25px 5px / 1px 1px no-repeat;
}

.rc:first-child {
    margin-left: -18.5px;
    background: none;
}

.marker {
    position: absolute;
    width: 8px;
    height: 18px;
}

.m-left {
    left: 131px;
    top: -2px;
}

.m-right {
    left: 625px;
    top: -2px;
}

.page {
    width: 730px;
    flex: 1;
    min-height: 0;
    margin-left: 128px;
    background: white;
    overflow: hidden;
    padding: 0 100px 0 135px;
    font-family: "Liberation Serif", serif;
    font-size: 14.3px;
    color: #1a1a1a;
}

.page-text {
    margin-top: -6.3px;
}

.ln {
    line-height: 24.65px;
    text-align: justify;
    text-align-last: justify;
}

/* word's hinted widths run a little narrower on these lines */
.ln.tight {
    letter-spacing: -.12px;
}

.ln.end {
    text-align-last: left;
}

.ln.gap {
    margin-bottom: 10px;
}

.ln.first {
    text-indent: 22px;
}

.ln.tail {
    text-align-last: right;
    padding-right: 28px;
}

.ln u {
    text-decoration: underline wavy #e0202a 1px;
    text-underline-offset: 2px;
}

.li {
    display: flex;
}

.num {
    width: 44px;
    padding-left: 22px;
    line-height: 24.65px;
    flex: none;
}

.li-text {
    flex: 1;
    min-width: 0;
}

.vscroll {
    width: 9px;
    height: 505px;
    margin-top: 21px;
    background: #e0e0e0;
    display: flex;
    flex-direction: column;
    justify-content: space-between;
    position: relative;
}

.vs-btn {
    height: 12px;
    background: #f6f6f6;
    border: 1px solid #bbb;
    display: flex;
    align-items: center;
    justify-content: center;
}

.vs-btn .tri-up { border-bottom-color: #555; }

.vs-thumb {
    position: absolute;
    top: 136px;
    left: 0;
    width: 9px;
    height: 28px;
    background: white;
    border: 1px solid #bbb;
}

/* status bar */
.statusbar {
    height: 16px;
    background: #f3f3f3;
    border-top: 1px solid #cfcfcf;
    display: flex;
    align-items: center;
    font-size: 8.5px;
    color: #555;
    flex: none;
}

.sb-page { margin-left: 2px; width: 70px; }
.sb-words { width: 60px; }
.sb-book { margin-left: 1px; }
.sb-lang { margin-left: 14px; width: 101px; }
.sb-acc { margin-left: 1px; }

.sb-right {
    margin-left: auto;
    display: flex;
    align-items: center;
    height: 15px;
    width: 232px;
}

.sb-print {
    width: 32px;
    height: 15px;
    margin: 0 11px;
    background: #c8c8c8;
    display: flex;
    align-items: center;
    justify-content: center;
}

.zoom-minus { margin-left: 16px; }

.slider {
    width: 82px;
    height: 1px;
    background: #888;
    margin: 0 4px;
    position: relative;
}

.slider i {
    position: absolute;
    left: 40px;
    top: -4px;
    width: 3px;
    height: 9px;
    background: #444;
}

.zoom-plus { margin-left: 1px; }
.zoom-pct { margin-left: 9px; }

/* windows taskbar */
.taskbar {
    height: 40px;
    display: flex;
    align-items: center;
    background: linear-gradient(to right, #f3f1df, #f0ebdc 25%, #f7e6d2 55%, #efe6cf 75%, #e6eec8);
    font-size: 9.5px;
    color: #333;
}

.weather {
    width: 290px;
    padding-left: 16px;
    display: flex;
    align-items: center;
    gap: 5px;
    flex: none;
}

.cloud {
    width: 22px;
    height: 16px;
}

.w-text {
    display: flex;
    flex-direction: column;
    line-height: 13px;
}

.w-sub {
    color: #777;
}

.tk-icons {
    display: flex;
    flex: none;
}

.tk {
    width: 36.4px;
    height: 40px;
    display: flex;
    align-items: center;
    justify-content: center;
    position: relative;
}

.ti {
    width: 20px;
    height: 20px;
}

.ti-t {
    font-size: 9px;
    font-weight: 700;
    fill: white;
    font-family: "Liberation Sans", sans-serif;
}

.tk.active {
    background: rgba(255, 255, 255, .45);
    border-radius: 4px;
    height: 34px;
    margin: 0 3.2px;
    width: 30px;
}

.tk.run::after {
    content: "";
    position: absolute;
    left: 50%;
    bottom: 2px;
    width: 4px;
    height: 2px;
    margin-left: -2px;
    background: #888;
}

.tk.wide::after {
    width: 12px;
    margin-left: -6px;
    bottom: 0;
    background: #777;
}

.bdg {
    position: absolute;
    top: 3px;
    left: 22px;
    height: 13px;
    min-width: 13px;
    padding: 0 2px;
    border-radius: 7px;
    background: #e9252e;
    color: white;
    font-size: 8px;
    font-weight: 400;
    line-height: 13px;
    text-align: center;
}

.bdg-tg {
    left: 20px;
    font-size: 7px;
    background: #e5505a;
    border-radius: 4px;
}

.chrome-face {
    position: absolute;
    top: 6px;
    left: 19px;
    width: 13px;
    height: 13px;
    border-radius: 50%;
    background: #7b7670;
}

.tray {
    margin-left: 46px;
    display: flex;
    align-items: center;
    height: 40px;
    flex: none;
}

.tr-caret {
    width: 12px;
    height: 8px;
    margin: 0 5px;
}

.tr-mic {
    width: 12px;
    height: 17px;
    margin: 0 6px;
}

.tr-lang {
    width: 40px;
    text-align: center;
    line-height: 13px;
    font-size: 9.5px;
}

.tr-wifi {
    width: 16px;
    height: 14px;
    margin: 0 2px 0 3px;
}

.tr-vol {
    width: 15px;
    height: 14px;
    margin: 0 2px;
}

.tr-batt {
    width: 16px;
    height: 16px;
    margin: 0 4px;
}

.tr-clock {
    width: 56px;
    text-align: right;
    line-height: 13px;
    font-size: 9.5px;
    white-space: nowrap;
}

.tr-badge {
    width: 18px;
    height: 18px;
    margin-left: 7px;
    border-radius: 50%;
    background: #5d6d7e;
    color: white;
    font-size: 8px;
    display: flex;
    align-items: center;
    justify-content: center;
}

/* zoom toolbar */
.toolbar {
    height: 53px;
    display: flex;
    background: #1a1a1a;
    color: #b5b5b5;
    font-size: 11.3px;
}

.tb {
    width: 80px;
    flex: none;
    display: flex;
    flex-direction: column;
    align-items: center;
    position: relative;
    padding-top: 3px;
    white-space: nowrap;
}

.tb > span {
    position: absolute;
    top: 32px;
    line-height: 16px;
}

.tb-ico {
    width: 24px;
    height: 24px;
}

.tb-up {
    position: absolute;
    top: 13px;
    width: 10px;
    height: 8px;
}

.tb-unmute { width: 90px; }
.tb-unmute .tb-up { left: 73px; }
.tb-video { width: 90px; margin-left: 3px; }
.tb-video .tb-up { left: 75px; }
.tb-part { margin-left: 126px; }
.tb-chat { margin-left: 30px; }
.tb-chat .tb-up { left: 68px; }
.tb-share { margin-left: 13px; color: #2ed36b; }
.tb-rec { margin-left: 9px; }
.tb-cc { margin-left: 8px; }
.tb-break { width: 100px; margin-left: 9px; }
.tb-react { margin-left: 1px; }
.tb-white { margin-left: 10px; }

.tb-top {
    display: flex;
    align-items: flex-start;
    gap: 3px;
}

.part-ico {
    height: 22px;
    margin-top: 2px;
}

.tb-top em {
    font-style: normal;
    font-size: 11px;
    line-height: 14px;
}

.cc-box {
    width: 23px;
    height: 18px;
    margin-top: 4px;
    border-radius: 2px;
    background: #999;
    color: #1a1a1a;
    font-size: 9px;
    font-weight: 700;
    text-align: center;
    line-height: 18px;
}

.leave {
    width: 92px;
    height: 27px;
    margin: 13px 12px 0 auto;
    border: none;
    border-radius: 8px;
    background: #0e62c4;
    color: white;
    font-family: inherit;
    font-size: 11px;
    font-weight: 700;
}

/* overlays */
.shield {
    position: absolute;
    left: 8px;
    top: 8px;
    width: 24px;
    height: 24px;
    border-radius: 6px;
    background: #242424;
    display: flex;
    align-items: center;
    justify-content: center;
}

.shield svg {
    width: 13px;
    height: 15px;
}

.view-btn {
    position: absolute;
    left: 1304px;
    top: 8px;
    width: 59px;
    height: 25px;
    border-radius: 7px;
    background: #242424;
    color: #c8c8c8;
    font-size: 11px;
    display: flex;
    align-items: center;
    gap: 5px;
    padding-left: 6px;
}

.view-btn svg {
    width: 11px;
    height: 11px;
}

.banner {
    position: absolute;
    left: 556px;
    top: 0;
    width: 410px;
    height: 22px;
    display: flex;
    border-radius: 0 0 4px 4px;
    overflow: hidden;
    font-size: 11.5px;
    font-weight: 600;
}

.banner-green {
    width: 289px;
    background: #21d35f;
    color: #14341f;
    text-align: center;
    line-height: 21px;
    white-space: nowrap;
}

.banner-opts {
    flex: 1;
    background: #1c1c1c;
    color: white;
    display: flex;
    align-items: center;
    justify-content: center;
    gap: 3px;
    padding: 0 0 1px 20px;
}

.banner-opts .car {
    color: white;
}

.esc-toast {
    position: absolute;
    left: 408px;
    top: 351px;
    width: 550px;
    height: 65px;
    border-radius: 3px;
    background: rgba(58, 58, 58, .82);
    color: white;
    font-size: 17px;
    line-height: 68px;
    text-align: center;
}

.hatch {
    position: absolute;
    left: 326px;
    top: 602px;
    width: 727px;
    height: 73px;
    background: repeating-linear-gradient(45deg, #212b39, #212b39 1.5px, #2b3747 1.5px, #2b3747 3px);
}
```
